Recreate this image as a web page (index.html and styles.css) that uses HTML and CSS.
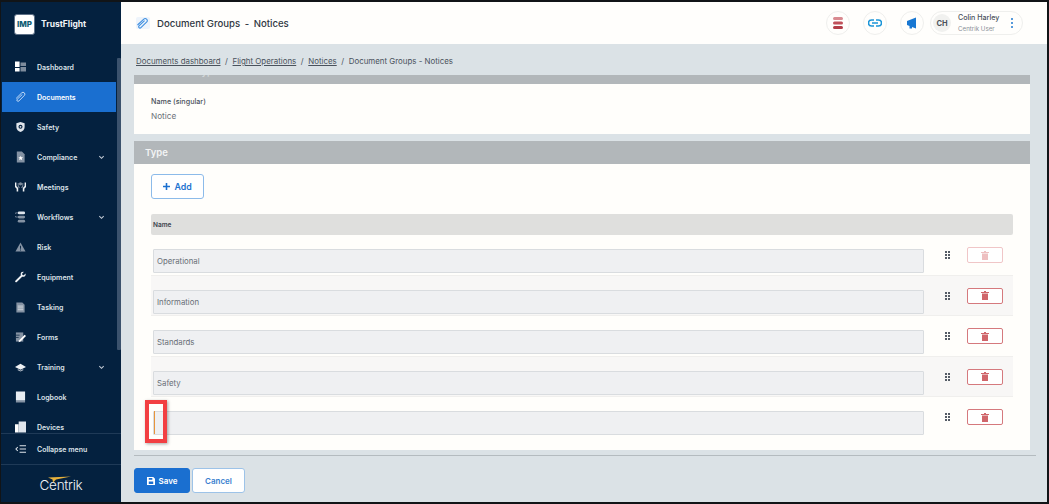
FILE: index.html
```html
<!DOCTYPE html>
<html lang="en">
<head>
<meta charset="utf-8">
<title>Document Groups - Notices</title>
<link rel="stylesheet" href="styles.css">
</head>
<body>
<div class="app">
  <aside class="sidebar">
    <div class="brand">
      <span class="brand-logo">IMP</span>
      <span class="brand-name">TrustFlight</span>
    </div>
    <div class="nav-wrap">
      <nav class="nav">
        <a class="nav-item"><svg class="nav-icon" viewBox="0 0 12 12"><path fill="#fff" d="M0 0h5v6H0zM0 7h5v4H0z"/><path fill="#7d8b9c" d="M6 1h6v4H6zM6 6h6v5H6z"/></svg><span>Dashboard</span></a>
        <a class="nav-item active"><svg class="nav-icon" viewBox="0 0 12 12"><path fill="none" stroke="#cfe2f8" stroke-width="1" d="M1.200 7.600 7.300 1.500a2 2 0 0 1 2.900 2.800L4.300 10.300a1.300 1.300 0 0 1-1.900-1.800L8 3.200"/></svg><span>Documents</span></a>
        <a class="nav-item"><svg class="nav-icon" viewBox="0 0 12 12"><path fill="#dfe5ec" d="M6 .5 10.500 2v4c0 2.800-2 4.600-4.500 5.500C3.500 10.600 1.500 8.800 1.500 6V2z"/><circle cx="6" cy="5.800" r="2.200" fill="#04213f"/><circle cx="6" cy="5.800" r="1" fill="#dfe5ec"/></svg><span>Safety</span></a>
        <a class="nav-item"><svg class="nav-icon" viewBox="0 0 12 12"><path fill="#8492a3" d="M2 0h5.500L10.500 3v9H2z"/><path fill="#fff" d="m6.200 4.500.8 1.800 1.800.1-1.400 1.200.5 1.900-1.700-1-1.700 1 .5-1.900L3.700 6.400l1.800-.1z"/></svg><span>Compliance</span><svg class="chev" viewBox="0 0 8 8"><path fill="none" stroke="#c4ccd6" stroke-width="1.200" d="m1.500 2.500 2.500 2.500 2.500-2.500"/></svg></a>
        <a class="nav-item"><svg class="nav-icon" viewBox="0 0 12 12"><path fill="#eef1f4" d="M0 1h1.500v4l2 2v4H1.800V8L0 6zM12 1h-1.500v4l-2 2v4h1.700V8L12 6z"/><circle cx="6" cy="2.500" r="1.800" fill="#7d8b9c"/><path fill="#7d8b9c" d="M3 1.500h1V5l1 1v1H4L3 5.500zM9 1.500H8V5L7 6v1h1l1-1.500z"/></svg><span>Meetings</span></a>
        <a class="nav-item"><svg class="nav-icon" viewBox="0 0 12 12"><rect x="3" y="0" width="8" height="3" rx="1.500" fill="#dfe5ec"/><rect x="3" y="4.500" width="8" height="3" rx="1.500" fill="#8492a3"/><rect x="3" y="9" width="8" height="3" rx="1.500" fill="#8492a3"/><path fill="none" stroke="#8492a3" d="M3 1.500H1.500A1.500 1.500 0 0 0 1.500 6H3"/></svg><span>Workflows</span><svg class="chev" viewBox="0 0 8 8"><path fill="none" stroke="#c4ccd6" stroke-width="1.200" d="m1.500 2.500 2.500 2.500 2.500-2.500"/></svg></a>
        <a class="nav-item"><svg class="nav-icon" viewBox="0 0 12 12"><path fill="#8492a3" d="M6 1 11.500 11H.5z"/><path fill="#04213f" d="M5.500 4.500h1v3.500h-1zM5.500 8.800h1v1h-1z"/></svg><span>Risk</span></a>
        <a class="nav-item"><svg class="nav-icon" viewBox="0 0 12 12"><path fill="#eef1f4" d="M11.500 2.300 9.600 4 8.100 3.700 7.800 2.300 9.600.5C7.900 0 6.200 1 6.200 2.900c0 .5.100.8.200 1.200L.6 9.900c-.6.600-.6 1.200-.1 1.600s1 .4 1.500-.1l5.800-5.700c2.100.7 4.400-1 3.700-3.400z"/></svg><span>Equipment</span></a>
        <a class="nav-item"><svg class="nav-icon" viewBox="0 0 12 12"><path fill="#8492a3" d="M1.500 1H8l2.500 2.500V12h-9z"/><path stroke="#eef1f4" stroke-width=".8" d="M3 5h6M3 7h6M3 9h6"/></svg><span>Tasking</span></a>
        <a class="nav-item"><svg class="nav-icon" viewBox="0 0 12 12"><path fill="#8492a3" d="M1 1h8v10H1z"/><path stroke="#04213f" stroke-width=".8" d="M1 4h4M1 6.500h3"/><path fill="#fff" d="M10.500 3.500 12 5l-6 6-2 .7.500-2.200z"/></svg><span>Forms</span></a>
        <a class="nav-item"><svg class="nav-icon" viewBox="0 0 12 12"><path fill="#eef1f4" d="M6 2.500 12 6 6 9 0 6z"/><path fill="#aeb8c4" d="M3 8.200 6 9.800l3-1.600v1.300L6 11 3 9.500z"/></svg><span>Training</span><svg class="chev" viewBox="0 0 8 8"><path fill="none" stroke="#c4ccd6" stroke-width="1.200" d="m1.500 2.500 2.500 2.500 2.500-2.500"/></svg></a>
        <a class="nav-item"><svg class="nav-icon" viewBox="0 0 12 12"><path fill="#e8edf2" d="M1 0h10v10H1z"/><path fill="#8492a3" d="M1 10h10v2H1z"/></svg><span>Logbook</span></a>
        <a class="nav-item"><svg class="nav-icon" viewBox="0 0 12 12"><path fill="#fff" d="M0 3h4v9H0z"/><path fill="#dfe5ec" d="M4 0h8v12H4z"/></svg><span>Devices</span></a>
      </nav>
      <div class="nav-scrollbar"><div class="nav-thumb"></div></div>
    </div>
    <a class="collapse"><svg class="nav-icon" viewBox="0 0 12 12"><path stroke="#dfe5ec" stroke-width="1.100" fill="none" d="M5 2.500h7M5 6h7M5 9.500h7M3 4 1 6l2 2"/></svg><span>Collapse menu</span></a>
    <div class="sidebar-logo">
      <span class="centrik">Centrik</span>
      <svg class="centrik-mark" viewBox="0 0 24 7"><path fill="#e8b23c" d="M1 1.500 24 .5 9 3.500 6 6.500 5.500 3.500z"/></svg>
    </div>
  </aside>

  <main class="main">
    <header class="topbar">
      <svg class="title-icon" viewBox="0 0 14 12"><rect width="14" height="12" rx="2" fill="#eef4fb"/><path fill="none" stroke="#3f8fe0" stroke-width="1.100" d="M1.500 8 7.800 2.100a2.100 2.100 0 0 1 3 2.900L4.900 10.600a1.300 1.300 0 0 1-1.900-1.800L8.600 3.600"/></svg>
      <h1 class="title">Document Groups <span class="title-sep">-</span> Notices</h1>
      <div class="topbar-actions">
        <span class="round-btn"><svg viewBox="0 0 14 14" class="round-icon"><rect x="2" y="1" width="10" height="3" rx="1.500" fill="#d98a90"/><rect x="2" y="5.500" width="10" height="3" rx="1.500" fill="#c0505a"/><rect x="2" y="10" width="10" height="3" rx="1.500" fill="#b23d48"/></svg></span>
        <span class="round-btn"><svg viewBox="0 0 14 14" class="round-icon"><g fill="none" stroke="#1b95d8" stroke-width="1.500"><path d="M6 4H3.500a3 3 0 0 0 0 6H6M8 4h2.500a3 3 0 0 1 0 6H8M4 7h6"/></g></svg></span>
        <span class="round-btn"><svg viewBox="0 0 14 14" class="round-icon"><path fill="#1877d2" d="M2 5 11 1.500v11L7 11v1.500H4.500V10L2 9z"/></svg></span>
        <div class="user">
          <span class="avatar">CH</span>
          <div class="user-text">
            <span class="user-name">Colin Harley</span>
            <span class="user-role">Centrik User</span>
          </div>
          <svg class="user-more" viewBox="0 0 4 12"><circle cx="2" cy="2" r="1" fill="#1f78d1"/><circle cx="2" cy="6" r="1" fill="#1f78d1"/><circle cx="2" cy="10" r="1" fill="#1f78d1"/></svg>
        </div>
      </div>
    </header>

    <div class="content">
      <div class="crumbs">
        <a class="crumb">Documents dashboard</a><span class="crumb-sep">/</span>
        <a class="crumb">Flight Operations</a><span class="crumb-sep">/</span>
        <a class="crumb">Notices</a><span class="crumb-sep">/</span>
        <span class="crumb-current">Document Groups - Notices</span>
      </div>

      <div class="scroll">
        <div class="scroll-body">
          <section class="card card-first">
            <div class="card-head-clipped"><span>Document Type</span></div>
            <div class="singular">
              <div class="field-label">Name (singular)</div>
              <div class="field-value">Notice</div>
            </div>
          </section>

          <section class="card card-type">
            <div class="card-head">Type</div>
            <div class="card-body">
              <button class="add-btn"><svg class="add-icon" viewBox="0 0 8 8"><path stroke="#1b6fd0" stroke-width="1.800" d="M4 0v8M0 4h8"/></svg>Add</button>
              <div class="table-head">Name</div>
              <div class="row">
                <div class="input">Operational</div>
                <svg class="drag" viewBox="0 0 5 8"><g fill="#555c66"><rect width="2" height="2"/><rect x="3" width="2" height="2"/><rect y="3" width="2" height="2"/><rect x="3" y="3" width="2" height="2"/><rect y="6" width="2" height="2"/><rect x="3" y="6" width="2" height="2"/></g></svg>
                <button class="del del-off"><svg class="trash" viewBox="0 0 8 9"><path fill="currentColor" d="M3 0h2v1h3v1H0V1h3zM1 2.500h6V9H1z"/></svg></button>
              </div>
              <div class="row row-alt">
                <div class="input">Information</div>
                <svg class="drag" viewBox="0 0 5 8"><g fill="#555c66"><rect width="2" height="2"/><rect x="3" width="2" height="2"/><rect y="3" width="2" height="2"/><rect x="3" y="3" width="2" height="2"/><rect y="6" width="2" height="2"/><rect x="3" y="6" width="2" height="2"/></g></svg>
                <button class="del"><svg class="trash" viewBox="0 0 8 9"><path fill="currentColor" d="M3 0h2v1h3v1H0V1h3zM1 2.500h6V9H1z"/></svg></button>
              </div>
              <div class="row">
                <div class="input">Standards</div>
                <svg class="drag" viewBox="0 0 5 8"><g fill="#555c66"><rect width="2" height="2"/><rect x="3" width="2" height="2"/><rect y="3" width="2" height="2"/><rect x="3" y="3" width="2" height="2"/><rect y="6" width="2" height="2"/><rect x="3" y="6" width="2" height="2"/></g></svg>
                <button class="del"><svg class="trash" viewBox="0 0 8 9"><path fill="currentColor" d="M3 0h2v1h3v1H0V1h3zM1 2.500h6V9H1z"/></svg></button>
              </div>
              <div class="row row-alt">
                <div class="input">Safety</div>
                <svg class="drag" viewBox="0 0 5 8"><g fill="#555c66"><rect width="2" height="2"/><rect x="3" width="2" height="2"/><rect y="3" width="2" height="2"/><rect x="3" y="3" width="2" height="2"/><rect y="6" width="2" height="2"/><rect x="3" y="6" width="2" height="2"/></g></svg>
                <button class="del"><svg class="trash" viewBox="0 0 8 9"><path fill="currentColor" d="M3 0h2v1h3v1H0V1h3zM1 2.500h6V9H1z"/></svg></button>
              </div>
              <div class="row">
                <div class="input input-empty"></div>
                <svg class="drag" viewBox="0 0 5 8"><g fill="#555c66"><rect width="2" height="2"/><rect x="3" width="2" height="2"/><rect y="3" width="2" height="2"/><rect x="3" y="3" width="2" height="2"/><rect y="6" width="2" height="2"/><rect x="3" y="6" width="2" height="2"/></g></svg>
                <button class="del"><svg class="trash" viewBox="0 0 8 9"><path fill="currentColor" d="M3 0h2v1h3v1H0V1h3zM1 2.500h6V9H1z"/></svg></button>
                <div class="highlight"><span class="caret"></span></div>
              </div>
            </div>
          </section>
        </div>
        <div class="scroll-track"></div>
      </div>

      <footer class="actions">
        <button class="save"><svg class="save-icon" viewBox="0 0 9 9"><path fill="#fff" d="M0 0h7l2 2v7H0z"/><path fill="#1b6fd0" d="M2 1h4v2H2zM2 5h5v3H2z"/></svg>Save</button>
        <button class="cancel">Cancel</button>
      </footer>
    </div>
  </main>
</div>
</body>
</html>
```
FILE: styles.css
```css
* { box-sizing: border-box; }
html, body { margin: 0; height: 100%; }
body {
  background: #111417;
  font-family: Inter, "Liberation Sans", sans-serif;
  color: #3a424c;
  overflow: hidden;
}
button { font-family: inherit; cursor: pointer; }
.app {
  display: flex;
  width: 1046px;
  height: 500px;
  margin: 2px 2px 2px 1px;
  background: #dbe2e6;
}

/* Sidebar */
.sidebar {
  width: 120px;
  flex: none;
  display: flex;
  flex-direction: column;
  background: #04213f;
  color: #e8edf2;
}
.brand {
  height: 50px;
  flex: none;
  display: flex;
  align-items: center;
  padding: 0 0 6px 13px;
  gap: 6px;
}
.brand-logo {
  width: 21px;
  height: 21px;
  background: #fff;
  border: 1px solid #5d7087;
  border-radius: 3px;
  color: #0d5c72;
  font-size: 8px;
  font-weight: 800;
  display: flex;
  align-items: center;
  justify-content: center;
}
.brand-name { font-size: 8.500px; font-weight: 700; color: #f1f4f7; }
.nav-wrap {
  height: 381px;
  flex: none;
  display: flex;
  overflow: hidden;
  padding-left: 1px;
}
.nav {
  width: 114px;
  display: flex;
  flex-direction: column;
  overflow: hidden;
}
.nav-item {
  height: 30px;
  flex: none;
  display: flex;
  align-items: center;
  padding: 0 0 0 13px;
  font-size: 7px;
  font-weight: 600;
  color: #dde3e9;
}
.nav-item.active { background: #1a6fd0; color: #fff; }
.nav-icon { width: 11px; height: 12px; margin-right: 11px; flex: none; }
.chev { width: 7px; height: 7px; margin-left: auto; margin-right: 11px; }
.nav-scrollbar { width: 4px; margin-left: 1px; padding-top: 6px; }
.nav-thumb { height: 292px; background: #3b526d; border-radius: 1px; }
.collapse {
  height: 31px;
  flex: none;
  display: flex;
  align-items: center;
  padding-left: 14px;
  border-top: 1px solid #1f3a57;
  font-size: 7px;
  font-weight: 600;
  color: #dde3e9;
}
.sidebar-logo {
  flex: 1;
  position: relative;
  border-top: 1px solid #1f3a57;
  display: flex;
  align-items: center;
  justify-content: center;
}
.centrik {
  font-size: 13.500px;
  font-weight: 300;
  color: #f2f4f6;
  letter-spacing: -.3px;
  margin-top: 3px;
}
.centrik-mark {
  position: absolute;
  left: 46px;
  top: 11px;
  width: 24px;
  height: 7px;
}

/* Top bar */
.main { flex: 1; min-width: 0; display: flex; flex-direction: column; }
.topbar {
  height: 42px;
  flex: none;
  display: flex;
  align-items: center;
  background: #fffefc;
  padding: 0 0 0 15px;
}
.title-icon { width: 14px; height: 12px; flex: none; margin-right: 7px; }
.title { margin: 0; font-size: 9.600px; font-weight: 500; color: #2f3742; }
.title-sep { margin: 0 2px; }
.topbar-actions {
  margin-left: auto;
  margin-right: 24px;
  display: flex;
  align-items: center;
  gap: 13px;
}
.round-btn {
  width: 24px;
  height: 24px;
  border: 1px solid #efefed;
  border-radius: 50%;
  display: flex;
  align-items: center;
  justify-content: center;
}
.round-icon { width: 14px; height: 14px; }
.user {
  width: 93px;
  height: 24px;
  margin-left: -7px;
  border: 1px solid #efefed;
  border-radius: 12px;
  display: flex;
  align-items: center;
  padding-left: 2px;
}
.avatar {
  width: 18px;
  height: 18px;
  border-radius: 50%;
  background: #f1f1ef;
  font-size: 7.500px;
  font-weight: 700;
  color: #4a515b;
  display: flex;
  align-items: center;
  justify-content: center;
  flex: none;
}
.user-text { display: flex; flex-direction: column; margin-left: 7px; gap: 3px; }
.user-name { font-size: 7.100px; font-weight: 500; color: #4a515b; line-height: 8px; }
.user-role { font-size: 6.200px; color: #8b9098; line-height: 7px; }
.user-more { width: 4px; height: 12px; margin-left: auto; margin-right: 8px; }

/* Content */
.content { flex: 1; min-height: 0; display: flex; flex-direction: column; padding-left: 13px; }
.crumbs {
  height: 31px;
  flex: none;
  display: flex;
  align-items: center;
  padding: 3px 0 0 2px;
  font-size: 7.900px;
  color: #4a525c;
}
.crumb { text-decoration: underline; }
.crumb-sep { margin: 0 4.600px; }
.scroll {
  height: 381px;
  flex: none;
  display: flex;
  border-bottom: 1px solid #b4bbbf;
  margin-right: 11px;
}
.scroll-body { width: 896px; flex: none; display: flex; flex-direction: column; gap: 7px; }
.scroll-track { width: 4px; margin-left: 7px; background: #d3dbe0; }
.card { background: #fffefb; }
.card-first { height: 59px; }
.card-head-clipped {
  height: 9px;
  background: #b2b7ba;
  overflow: hidden;
  display: flex;
  align-items: flex-end;
  padding-left: 12px;
}
.card-head-clipped span {
  font-size: 9.500px;
  font-weight: 600;
  color: #d3d7d9;
  line-height: 10px;
  margin-bottom: 7px;
}
.singular { padding: 13px 0 0 17px; }
.field-label { font-size: 7.200px; font-weight: 500; color: #4a515b; line-height: 9px; }
.field-value { font-size: 8.200px; color: #6c727a; margin-top: 5px; line-height: 10px; }
.card-type { height: 309px; }
.card-head {
  height: 23px;
  background: #b2b7ba;
  color: #f3f4f5;
  font-size: 9.500px;
  font-weight: 600;
  display: flex;
  align-items: center;
  padding-left: 11px;
}
.card-body { padding: 10px 17px 0; position: relative; }
.add-btn {
  width: 53px;
  height: 25px;
  display: flex;
  align-items: center;
  justify-content: center;
  gap: 4px;
  background: #fff;
  border: 1px solid #8cbbea;
  border-radius: 3px;
  color: #2373d0;
  font-size: 8.800px;
  font-weight: 600;
  padding: 0;
}
.add-icon { width: 7px; height: 7px; }
.table-head {
  margin-top: 15px;
  height: 21px;
  width: 862px;
  background: #dfdfdd;
  border-radius: 2px;
  display: flex;
  align-items: center;
  padding-left: 2px;
  font-size: 6.500px;
  font-weight: 600;
  color: #3a424c;
}
.row {
  position: relative;
  width: 862px;
  height: 40.600px;
  display: flex;
  align-items: flex-start;
  padding: 14px 0 0 2px;
  border-bottom: 1px solid #f0efed;
}
.row:last-child { border-bottom: 0; }
.row-alt { background: #f8f7f6; }
.input {
  width: 771px;
  height: 24px;
  flex: none;
  background: #eff0f2;
  border: 1px solid #d9dcdf;
  border-radius: 1px;
  display: flex;
  align-items: center;
  padding-left: 3px;
  font-size: 7.800px;
  color: #686e76;
}
.drag { width: 5px; height: 8px; margin: 2px 0 0 21px; flex: none; }
.del {
  width: 36px;
  height: 16px;
  margin: -2px 0 0 17px;
  flex: none;
  background: #fff;
  border: 1px solid #d5797d;
  border-radius: 2px;
  padding: 0;
  color: #d0666b;
  display: flex;
  align-items: center;
  justify-content: center;
}
.del-off { border-color: #f0c6c7; color: #eebfc0; }
.trash { width: 8px; height: 9px; }
.highlight {
  position: absolute;
  left: -6px;
  top: 3px;
  width: 22px;
  height: 43px;
  border: 4px solid #f23f42;
  box-shadow: 1px 1px 3px rgba(0, 0, 0, .35);
  z-index: 1;
}
.caret {
  position: absolute;
  left: 5px;
  top: 7px;
  width: 1px;
  height: 23px;
  background: #e8953a;
}

/* Footer */
.actions { display: flex; gap: 2px; padding-top: 12px; }
.save {
  width: 56px;
  height: 25px;
  background: #1a6fd0;
  border: 1px solid #1a6fd0;
  border-radius: 3px;
  color: #fff;
  font-size: 8px;
  font-weight: 600;
  display: flex;
  align-items: center;
  justify-content: center;
  gap: 4px;
  padding: 0;
}
.save-icon { width: 8px; height: 8px; }
.cancel {
  width: 53px;
  height: 25px;
  background: #fff;
  border: 1px solid #9dc3e8;
  border-radius: 3px;
  color: #3a7fcf;
  font-size: 8px;
  font-weight: 600;
  padding: 0;
}
```
